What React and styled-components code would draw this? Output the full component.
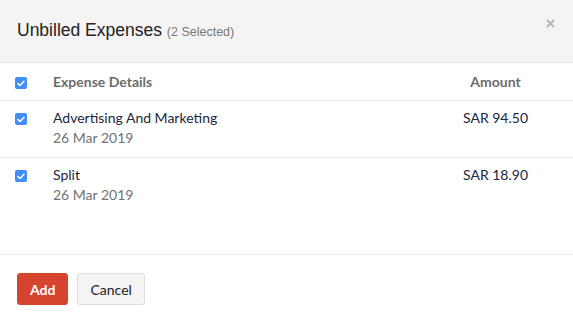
import React, { useState } from 'react';
import styled, { createGlobalStyle } from 'styled-components';

const GlobalStyle = createGlobalStyle`
  html, body {
    margin: 0;
    padding: 0;
    background: #fff;
  }
  body {
    font-family: Lato, "Open Sans", Arial, sans-serif;
    color: #21263c;
  }
`;

const Modal = styled.div`
  width: 573px;
  height: 323px;
  display: flex;
  flex-direction: column;
  background: #fff;
`;

const Header = styled.div`
  height: 62px;
  display: flex;
  align-items: center;
  justify-content: space-between;
  padding: 0 17px 0 17px;
  background: #f4f4f4;
  border-bottom: 1px solid #e1e1e1;
  box-sizing: content-box;
`;

const Title = styled.h4`
  margin: 0;
  font-family: "Liberation Sans", Arial, sans-serif;
  font-size: 17.5px;
  font-weight: normal;
  color: #222;
  padding-bottom: 2px;
`;

const Muted = styled.span`
  font-size: 12.5px;
  color: #777;
`;

const Close = styled.button`
  border: none;
  background: none;
  padding: 0;
  margin-top: -14px;
  width: 10px;
  height: 10px;
  display: flex;
  cursor: pointer;
`;

const Body = styled.div`
  flex: 1;
  border-bottom: 1px solid #ececec;
`;

const Row = styled.div`
  display: grid;
  grid-template-columns: 38px 1fr 113px;
  padding: 0 21px 0 15px;
  height: ${(p) => p.$h}px;
  align-items: start;
  border-bottom: ${(p) => (p.$last ? 'none' : '1px solid #ececec')};
  box-sizing: border-box;
`;

const Check = styled.span`
  width: 12px;
  height: 12px;
  margin-top: ${(p) => p.$top}px;
  border-radius: 2px;
  background: #408dfb;
  display: flex;
  align-items: center;
  justify-content: center;
`;

const HeadCell = styled.div`
  margin-top: 10px;
  font-size: 14px;
  font-weight: bold;
  color: #6c6c6c;
  text-align: ${(p) => (p.$center ? 'center' : 'left')};
`;

const Cell = styled.div`
  margin-top: 7px;
  font-size: 14px;
  line-height: 20px;
  color: #21263c;
  text-align: ${(p) => (p.$center ? 'center' : 'left')};
`;

const Date = styled.div`
  color: #727272;
`;

const Footer = styled.div`
  height: 68px;
  display: flex;
  align-items: center;
  gap: 9px;
  padding: 0 17px;
`;

const Button = styled.button`
  height: 32px;
  padding: 0 12px;
  font-family: Lato, "Open Sans", Arial, sans-serif;
  font-size: 14px;
  font-weight: ${(p) => (p.$primary ? 'bold' : 'normal')};
  border-radius: 3px;
  border: 1px solid ${(p) => (p.$primary ? '#d6432f' : '#dcdcdc')};
  background: ${(p) => (p.$primary ? '#d6432f' : '#f4f4f4')};
  color: ${(p) => (p.$primary ? '#fff' : '#222')};
  cursor: pointer;
`;

const Tick = () => (
  <svg width="8" height="7" viewBox="0 0 8 7">
    <path d="M1 3.6 L3 5.5 L7 1.2" fill="none" stroke="#fff" strokeWidth="1.5" strokeLinecap="round" strokeLinejoin="round" />
  </svg>
);

const expenses = [
  { id: 1, name: 'Advertising And Marketing', date: '26 Mar 2019', amount: 'SAR 94.50' },
  { id: 2, name: 'Split', date: '26 Mar 2019', amount: 'SAR 18.90' },
];

const App = () => {
  const [items] = useState(expenses);

  return (
    <Modal>
      <GlobalStyle />
      <Header>
        <Title>
          Unbilled Expenses <Muted>(2 Selected)</Muted>
        </Title>
        <Close aria-label="close">
          <svg width="9" height="9" viewBox="0 0 9 9">
            <path d="M1 1 L8 8 M8 1 L1 8" stroke="#b4b4b4" strokeWidth="1.8" />
          </svg>
        </Close>
      </Header>
      <Body>
        <Row $h={38}>
          <Check $top={14}><Tick /></Check>
          <HeadCell>Expense Details</HeadCell>
          <HeadCell $center>Amount</HeadCell>
        </Row>
        {items.map((e, i) => (
          <Row key={e.id} $h={57} $last={i === items.length - 1}>
            <Check $top={12}><Tick /></Check>
            <Cell>
              <div>{e.name}</div>
              <Date>{e.date}</Date>
            </Cell>
            <Cell $center>{e.amount}</Cell>
          </Row>
        ))}
      </Body>
      <Footer>
        <Button $primary>Add</Button>
        <Button>Cancel</Button>
      </Footer>
    </Modal>
  );
};

export default App;
